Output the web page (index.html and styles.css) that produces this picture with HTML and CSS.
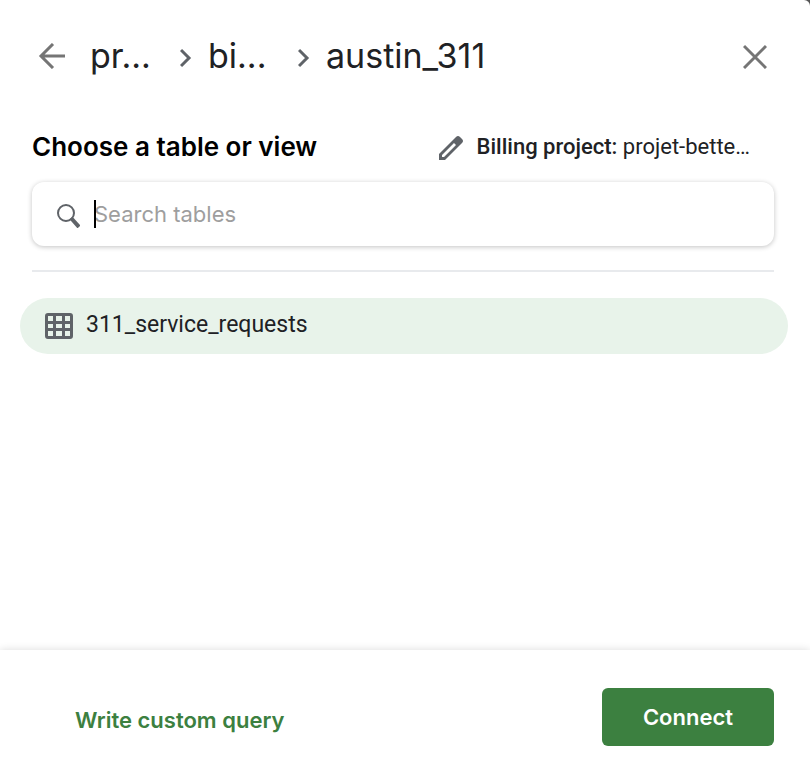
FILE: index.html
```html
<!DOCTYPE html>
<html lang="en">
<head>
  <meta charset="UTF-8">
  <meta name="viewport" content="width=device-width, initial-scale=1.0">
  <title>Choose a table or view</title>
  <link rel="stylesheet" href="styles.css">
</head>
<body>

  <div class="dialog" role="dialog" aria-label="Choose a table or view">

    <!-- Header -->
    <header class="dialog-header">
      <button class="icon-btn" aria-label="Back">
        <svg width="28" height="26" viewBox="0 0 28 26" fill="none" stroke="#757575" stroke-width="3">
          <path d="M27 13H3M15 1L3 13l12 12"/>
        </svg>
      </button>
      <nav class="breadcrumb" aria-label="Breadcrumb">
        <a class="crumb" href="#">pr...</a>
        <svg class="chevron" width="12" height="24" viewBox="0 0 12 24" fill="none" stroke="#5f6368" stroke-width="3">
          <path d="M1 6l8 8-8 8"/>
        </svg>
        <a class="crumb" href="#">bi...</a>
        <svg class="chevron" width="12" height="24" viewBox="0 0 12 24" fill="none" stroke="#5f6368" stroke-width="3">
          <path d="M1 6l8 8-8 8"/>
        </svg>
        <span aria-current="page">austin_311</span>
      </nav>
      <button class="icon-btn" aria-label="Close">
        <svg width="24" height="26" viewBox="0 0 24 26" fill="none" stroke="#757575" stroke-width="3">
          <path d="M1 3l22 22M23 3L1 25"/>
        </svg>
      </button>
    </header>

    <!-- Main Content -->
    <main>
      <div class="title-row">
        <h1>Choose a table or view</h1>
        <button class="billing">
          <svg width="24" height="26" viewBox="0 -2 24 26">
            <path fill="#5f6368" fill-rule="evenodd" d="M0 24v-6L17 1q2-2 4 0l2 2q2 2 0 4L6 24zM3 21h2L17 9l-2-2L3 19z"/>
          </svg>
          <span><b>Billing project:</b> projet-bette…</span>
        </button>
      </div>

      <div class="search-bar">
        <svg width="24" height="28" viewBox="0 -4 24 28" fill="none" stroke="#5f6368">
          <circle cx="10" cy="9" r="8" stroke-width="2"/>
          <path d="M15 14l8 9" stroke-width="4"/>
        </svg>
        <div class="search-field">
          <input type="text" placeholder="Search tables" aria-label="Search tables">
          <span class="caret"></span>
        </div>
      </div>

      <ul class="table-list">
        <li>
          <button class="table-item">
            <svg width="28" height="26" viewBox="0 0 28 26">
              <path fill="#5f6368" fill-rule="evenodd" d="M3 0h22q3 0 3 3v20q0 3-3 3H3q-3 0-3-3V3q0-3 3-3zM3 3v5h5V3zM11 3v5h6V3zM20 3v5h5V3zM3 11v4h5v-4zM11 11v4h6v-4zM20 11v4h5v-4zM3 18v5h5v-5zM11 18v5h6v-5zM20 18v5h5v-5z"/>
            </svg>
            <span>311_service_requests</span>
          </button>
        </li>
      </ul>
    </main>

    <!-- Footer -->
    <footer>
      <button class="btn-text">Write custom query</button>
      <button class="btn-primary">Connect</button>
    </footer>

  </div>

</body>
</html>
```
FILE: styles.css
```css
:root {
  --color-primary: #3c8040;
  --color-selected: #e8f3ea;
  --color-text: #202124;
  --color-border: #e8eaed;
  --font-title: Inter, "Open Sans", sans-serif;
  --font-body: Roboto, Arial, sans-serif;
}

*, *::before, *::after {
  margin: 0; padding: 0; box-sizing: border-box;
}
body {
  font-family: var(--font-body);
  color: var(--color-text);
  background: #555;
}
a {
  color: inherit;
  text-decoration: none;
}
button {
  font-family: inherit;
  color: inherit;
  background: none;
  border: none;
  cursor: pointer;
}
svg {
  display: block;
  flex-shrink: 0;
}

.dialog {
  display: flex;
  flex-direction: column;
  min-height: 100vh;
  background: #fff;
  border-top-right-radius: 6px;
}

.dialog-header {
  display: flex;
  align-items: center;
  padding: 32px 43px 0 38px;
}
.breadcrumb {
  flex: 1;
  display: flex;
  align-items: center;
  margin-left: 24px;
  font-family: var(--font-title);
  font-size: 34px;
  line-height: 48px;
}
.crumb {
  width: 90px;
}
.chevron {
  margin-right: 16px;
}

main {
  flex: 1;
  padding: 50px 36px 0 32px;
}
.title-row {
  display: flex;
  align-items: center;
  justify-content: space-between;
  padding-right: 24px;
}
h1 {
  font-family: var(--font-title);
  font-size: 26px;
  font-weight: 600;
  line-height: 34px;
  color: #000;
}
.billing {
  display: flex;
  align-items: center;
  gap: 14px;
  font-size: 22px;
  line-height: 34px;
}
.billing b {
  font-weight: 500;
}

.search-bar {
  display: flex;
  align-items: center;
  gap: 14px;
  height: 64px;
  margin-top: 18px;
  padding: 0 24px;
  border-radius: 12px;
  box-shadow: 0 1px 5px rgba(0,0,0,0.24);
}
.search-field {
  position: relative;
  flex: 1;
}
.search-field input {
  width: 100%;
  border: none;
  outline: none;
  background: none;
  font-family: var(--font-title);
  font-size: 22px;
  line-height: 28px;
}
.search-field input::placeholder {
  color: #9e9e9e;
}
.caret {
  position: absolute;
  left: 0;
  top: 0;
  width: 2px;
  height: 28px;
  background: #000;
}

.table-list {
  list-style: none;
  margin-top: 24px;
  padding-top: 26px;
  border-top: 2px solid var(--color-border);
}
.table-list li {
  margin: 0 -14px 0 -12px;
}
.table-item {
  display: flex;
  align-items: center;
  gap: 13px;
  width: 100%;
  height: 56px;
  padding: 0 25px;
  border-radius: 28px;
  background: var(--color-selected);
  font-size: 23px;
}
.table-item span {
  padding-bottom: 3px;
}

footer {
  display: flex;
  align-items: center;
  justify-content: space-between;
  padding: 38px 36px 36px 75px;
  box-shadow: 0 0 8px rgba(0,0,0,0.14);
  font-family: var(--font-title);
}
.btn-text {
  padding-top: 6px;
  color: var(--color-primary);
  font-size: 22px;
  font-weight: 600;
  line-height: 52px;
}
.btn-primary {
  padding: 0 41px;
  border-radius: 6px;
  background: var(--color-primary);
  color: #fff;
  font-size: 22px;
  font-weight: 600;
  line-height: 58px;
}
```
